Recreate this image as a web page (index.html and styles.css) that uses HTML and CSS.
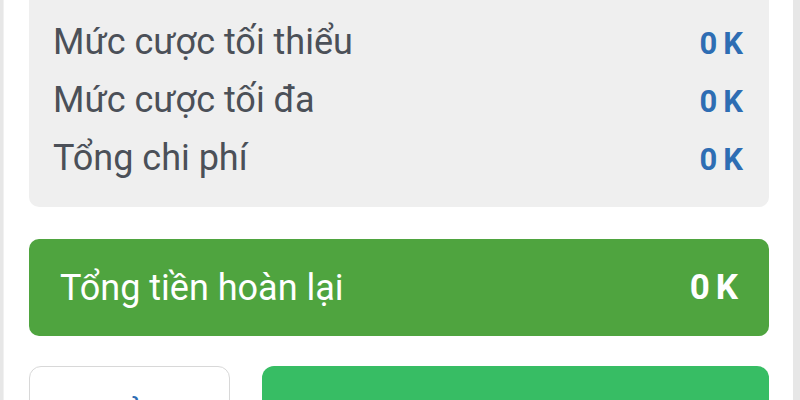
FILE: index.html
```html
<!DOCTYPE html>
<html lang="vi">
<head>
<meta charset="utf-8">
<title>Phiếu cược</title>
<link rel="stylesheet" href="styles.css">
</head>
<body>
<div class="panel">
  <div class="summary">
    <div class="row"><span class="label">Mức cược tối thiểu</span><span class="value">0K</span></div>
    <div class="row"><span class="label">Mức cược tối đa</span><span class="value">0K</span></div>
    <div class="row"><span class="label">Tổng chi phí</span><span class="value">0K</span></div>
  </div>
  <div class="refund">
    <span class="refund-label">Tổng tiền hoàn lại</span>
    <span class="refund-value">0K</span>
  </div>
  <div class="actions">
    <button class="btn btn-cancel">Hủy</button>
    <button class="btn btn-bet">Đặt cược ngay</button>
  </div>
</div>
</body>
</html>
```
FILE: styles.css
```css
html, body {
  margin: 0;
  padding: 0;
}
body {
  background: #e7e7e7;
  font-family: Roboto, "Noto Sans", "Liberation Sans", sans-serif;
  height: 400px;
  overflow: hidden;
}
.panel {
  margin-left: 4px;
  width: 740px;
  padding: 0 24px 40px 25px;
  background: #ffffff;
  min-height: 400px;
  box-shadow: -1px 0 0 #f1f1f1;
}
.summary {
  background: #efefef;
  border-radius: 0 0 10px 10px;
  padding: 13px 26px 20px 24px;
}
.row {
  display: flex;
  justify-content: space-between;
  align-items: baseline;
  height: 58px;
  line-height: 58px;
}
.label {
  font-size: 36px;
  color: #4b5058;
}
.value {
  font-size: 31px;
  font-weight: 700;
  color: #2e6db3;
  letter-spacing: 6px;
  margin-right: -6px;
}
.refund {
  margin-top: 32px;
  height: 97px;
  background: #4fa43f;
  border-radius: 10px;
  display: flex;
  align-items: center;
  justify-content: space-between;
  padding: 0 31px 0 31px;
  color: #ffffff;
}
.refund-label {
  font-size: 36px;
}
.refund-value {
  font-size: 35px;
  font-weight: 700;
  letter-spacing: 6px;
  margin-right: -6px;
}
.actions {
  margin-top: 30px;
  display: flex;
  gap: 32px;
}
.btn {
  height: 97px;
  border-radius: 12px;
  font-family: Roboto, "Noto Sans", "Liberation Sans", sans-serif;
  font-size: 36px;
  padding: 0;
  cursor: pointer;
}
.btn-cancel {
  width: 201px;
  background: #ffffff;
  border: 1px solid #d8d8d8;
  color: #2e6db3;
}
.btn-bet {
  flex: 1;
  background: #37bd64;
  border: none;
  color: #ffffff;
}
```
